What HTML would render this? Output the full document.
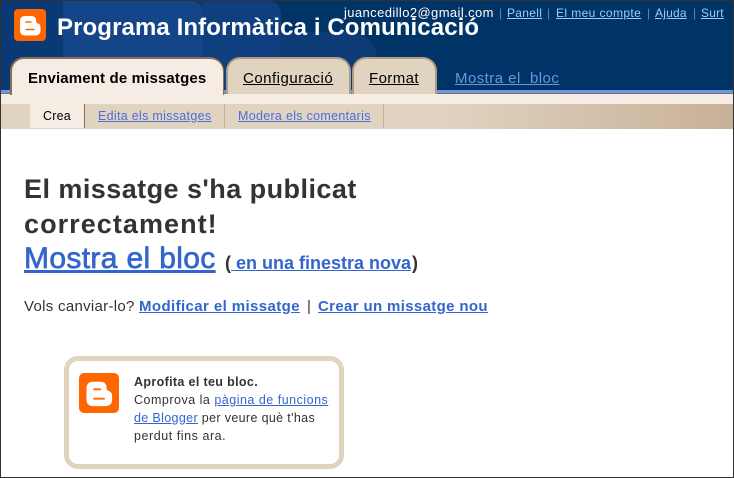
<!DOCTYPE html>
<html><head><meta charset="utf-8">
<style>
html,body{margin:0;padding:0;background:#fff}
#p{position:relative;width:734px;height:478px;overflow:hidden;background:#fff;font-family:"Liberation Sans",sans-serif;color:#333}
.t{position:absolute;white-space:nowrap;display:block}
a{text-decoration:underline;color:#3366cc}
.box{position:absolute;box-sizing:border-box}
</style></head><body><div id="p">
<div class="box" style="left:0;top:0;width:734px;height:91px;background:#003366"></div>
<div class="box" style="left:0;top:0;width:270px;height:91px;background:#0a3a75"></div>
<div class="box" style="left:270px;top:32px;width:107px;height:59px;background:#0c3b76;border-radius:0 26px 0 0"></div>
<div class="box" style="left:203px;top:0;width:78px;height:91px;background:#0f3f7f;border-radius:0 14px 0 0"></div>
<div class="box" style="left:63px;top:0;width:140px;height:91px;background:#134588;border-radius:0 14px 0 0"></div>
<div class="box" style="left:0;top:90px;width:734px;height:3px;background:#6699ee"></div>
<div class="box" style="left:0;top:93px;width:734px;height:1px;background:#8a6f56"></div>
<div class="box" style="left:0;top:94px;width:734px;height:10px;background:#f5ece3"></div>
<div class="box" style="left:0;top:104px;width:734px;height:25px;background:linear-gradient(90deg,#e0d3c0 0,#e0d3c0 60%,#c8b098 100%)"></div>

<svg class="box" style="left:14px;top:9px" width="32" height="32" viewBox="0 0 32 32"><rect width="32" height="32" rx="4" fill="#ff6600"/><path d="M11 7h6c3 0 5 1.500 5 4.500 0 1.500 .5 2.500 2 3 1.500 .5 2.500 1.800 2.500 3.500v3.500c0 3-2 5-5 5H11c-3 0-5-2-5-5V12c0-3 2-5 5-5z" fill="#fff"/><path d="M12 13h5M12 20.500h8" stroke="#ff6600" stroke-width="1.500" stroke-linecap="round"/></svg>
<span class="t" style="left:57px;top:13px;font-size:24px;line-height:30px;font-weight:bold;color:#fff;letter-spacing:.1px">Programa Informàtica i Comunicació</span>

<span class="t" style="left:344px;top:5px;font-size:13px;line-height:16px;color:#fff;letter-spacing:.4px">juancedillo2@gmail.com</span>
<span class="t" style="left:499px;top:6px;font-size:12px;line-height:15px;color:#5f84b0">|</span>
<a class="t" style="left:507px;top:6px;font-size:12px;line-height:15px;color:#99ccff;letter-spacing:.3px">Panell</a>
<span class="t" style="left:547px;top:6px;font-size:12px;line-height:15px;color:#5f84b0">|</span>
<a class="t" style="left:556px;top:6px;font-size:12px;line-height:15px;color:#99ccff;letter-spacing:.4px">El meu compte</a>
<span class="t" style="left:647px;top:6px;font-size:12px;line-height:15px;color:#5f84b0">|</span>
<a class="t" style="left:655px;top:6px;font-size:12px;line-height:15px;color:#99ccff;letter-spacing:.2px">Ajuda</a>
<span class="t" style="left:693px;top:6px;font-size:12px;line-height:15px;color:#5f84b0">|</span>
<a class="t" style="left:701px;top:6px;font-size:12px;line-height:15px;color:#99ccff;letter-spacing:.2px">Surt</a>

<div class="box" style="left:226px;top:57px;width:125px;height:37px;background:#e0d3c0;border:solid #b09c86;border-width:2px 2px 0 2px;border-radius:14px 14px 0 0"></div>
<div class="box" style="left:352px;top:57px;width:85px;height:37px;background:#e0d3c0;border:solid #b09c86;border-width:2px 2px 0 2px;border-radius:14px 14px 0 0"></div>
<div class="box" style="left:10px;top:57px;width:214px;height:38px;background:#f5ece3;border:solid #8a6f56;border-width:2px 1px 0 2px;border-radius:14px 14px 0 0"></div>
<div class="box" style="left:12px;top:93px;width:211px;height:2px;background:#f5ece3"></div>

<span class="t" style="left:28px;top:70px;font-size:15px;line-height:18px;font-weight:bold;color:#000;letter-spacing:.15px">Enviament de missatges</span>
<a class="t" style="left:243px;top:70px;font-size:15px;line-height:18px;color:#000;letter-spacing:.5px">Configuració</a>
<a class="t" style="left:369px;top:70px;font-size:15px;line-height:18px;color:#000;letter-spacing:.4px">Format</a>
<a class="t" style="left:455px;top:70px;font-size:15px;line-height:18px;color:#6699dd;letter-spacing:.45px;white-space:pre">Mostra el  bloc</a>

<div class="box" style="left:30px;top:104px;width:54px;height:24px;background:#f5ece3"></div>
<div class="box" style="left:84px;top:104px;width:1px;height:24px;background:#8a6f56"></div>
<div class="box" style="left:224px;top:104px;width:1px;height:24px;background:#c4b19c"></div>
<div class="box" style="left:383px;top:104px;width:1px;height:24px;background:#c4b19c"></div>
<span class="t" style="left:43px;top:108px;font-size:12.500px;line-height:16px;color:#000;letter-spacing:.2px">Crea</span>
<a class="t" style="left:98px;top:108px;font-size:12.500px;line-height:16px;color:#4a70d8;letter-spacing:.3px">Edita els missatges</a>
<a class="t" style="left:238px;top:108px;font-size:12.500px;line-height:16px;color:#4a70d8;letter-spacing:.3px">Modera els comentaris</a>

<span class="t" style="left:24px;top:171px;font-size:27px;line-height:36px;font-weight:bold;color:#333;letter-spacing:.45px">El missatge s'ha publicat</span>
<span class="t" style="left:24px;top:206px;font-size:27px;line-height:36px;font-weight:bold;color:#333;letter-spacing:1.05px">correctament!</span>
<a class="t" style="left:24px;top:241px;font-size:30px;line-height:36px;letter-spacing:.35px;font-weight:normal;-webkit-text-stroke:.7px #3366cc">Mostra el bloc</a>
<span class="t" style="left:225px;top:252px;font-size:18px;line-height:22px;font-weight:bold;color:#333">(</span>
<a class="t" style="left:231px;top:252px;font-size:18px;line-height:22px;font-weight:bold;white-space:pre;letter-spacing:0"> en una finestra nova</a>
<span class="t" style="left:412px;top:252px;font-size:18px;line-height:22px;font-weight:bold;color:#333">)</span>

<span class="t" style="left:24px;top:298px;font-size:15px;line-height:18px;color:#333;letter-spacing:.3px">Vols canviar-lo?</span>
<a class="t" style="left:139px;top:298px;font-size:15px;line-height:18px;font-weight:bold;letter-spacing:.4px">Modificar el missatge</a>
<span class="t" style="left:307px;top:298px;font-size:15px;line-height:18px;color:#333">|</span>
<a class="t" style="left:318px;top:298px;font-size:15px;line-height:18px;font-weight:bold;letter-spacing:.35px">Crear un missatge nou</a>

<div class="box" style="left:64px;top:356px;width:280px;height:113px;border:5px solid #e0d3c0;border-radius:14px;background:#fff"></div>
<svg class="box" style="left:79px;top:373px" width="40" height="40" viewBox="0 0 32 32"><rect width="32" height="32" rx="4" fill="#ff6600"/><path d="M11 7h6c3 0 5 1.500 5 4.500 0 1.500 .5 2.500 2 3 1.500 .5 2.500 1.800 2.500 3.500v3.500c0 3-2 5-5 5H11c-3 0-5-2-5-5V12c0-3 2-5 5-5z" fill="#fff"/><path d="M12 13h5M12 20.500h8" stroke="#ff6600" stroke-width="1.500" stroke-linecap="round"/></svg>
<span class="t" style="left:134px;top:374px;font-size:12.500px;line-height:16px;font-weight:bold;color:#333;letter-spacing:.35px">Aprofita el teu bloc.</span>
<span class="t" style="left:134px;top:392px;font-size:12.500px;line-height:16px;color:#333;letter-spacing:.5px">Comprova la <a>pàgina de funcions</a></span>
<span class="t" style="left:134px;top:410px;font-size:12.500px;line-height:16px;color:#333;letter-spacing:.35px"><a>de Blogger</a> per veure què t'has</span>
<span class="t" style="left:134px;top:428px;font-size:12.500px;line-height:16px;color:#333;letter-spacing:.55px">perdut fins ara.</span>

<div class="box" style="left:0;top:0;width:734px;height:478px;border:1px solid #333;pointer-events:none"></div>
</div></body></html>
